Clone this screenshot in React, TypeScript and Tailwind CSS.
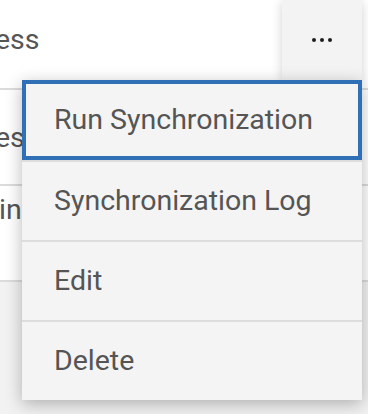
import React from 'react';

const rows = [
  { text: 'ess', pad: 'pt-[25px] -ml-[5px]' },
  { text: 'ess', pad: 'pt-[27px] -ml-[5px]' },
  { text: 'ing', pad: 'pt-[3px] -ml-[1px]' },
];

const menuItems = ['Run Synchronization', 'Synchronization Log', 'Edit', 'Delete'];

export default function App() {
  return (
    <div
      className="relative w-[368px] h-[414px] overflow-hidden bg-[#f2f2f2]"
      style={{ fontFamily: 'Roboto, "Liberation Sans", sans-serif' }}
    >
      {/* Table rows behind the menu */}
      <div className="flex flex-col -mt-[6px]">
        {rows.map((row, i) => (
          <div key={i} className={`h-[96px] bg-white border-b-2 border-[#dcdcdc] ${row.pad}`}>
            <div className="flex items-center h-[42px] text-[28.5px] text-[#555555] leading-none">
              {row.text}
            </div>
          </div>
        ))}
      </div>

      {/* Actions button */}
      <button
        className="absolute left-[282px] top-0 w-[80px] h-[80px] bg-[#f3f3f3] shadow-[0_2px_10px_rgba(0,0,0,0.18)] flex items-center justify-center gap-[4px]"
        aria-label="More actions"
      >
        <span className="w-[4px] h-[4px] rounded-full bg-[#1e1e1e]" />
        <span className="w-[4px] h-[4px] rounded-full bg-[#1e1e1e]" />
        <span className="w-[4px] h-[4px] rounded-full bg-[#1e1e1e]" />
      </button>

      {/* Dropdown menu */}
      <div className="absolute left-[22px] top-[80px] w-[340px] bg-[#f4f4f4] shadow-[0_4px_16px_rgba(0,0,0,0.28)] flex flex-col">
        {menuItems.map((item, i) => (
          <div
            key={item}
            className={`h-[80px] flex items-center px-[32px] text-[28.5px] text-[#555555] ${
              i === 0 ? 'ring-[4px] ring-inset ring-[#2f70b6]' : 'border-t-2 border-[#dddddd]'
            }`}
          >
            {item}
          </div>
        ))}
      </div>
    </div>
  );
}
